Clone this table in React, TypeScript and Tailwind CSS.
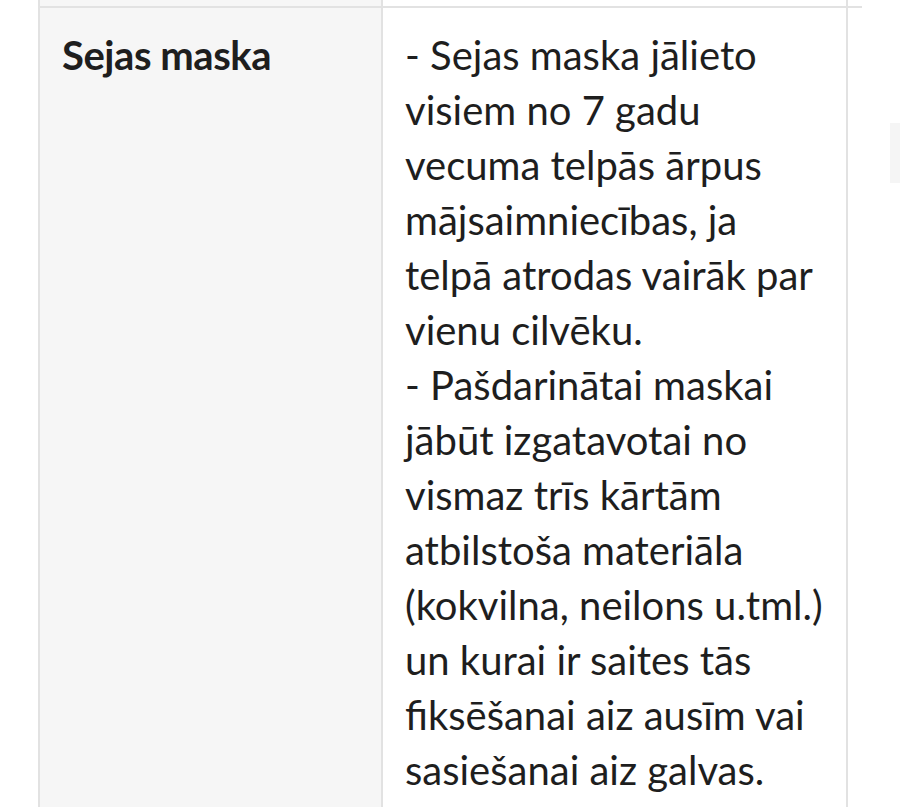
const rule = [
  '- Sejas maska jālieto visiem no 7 gadu vecuma telpās ārpus mājsaimniecības, ja telpā atrodas vairāk par vienu cilvēku.',
  '- Pašdarinātai maskai jābūt izgatavotai no vismaz trīs kārtām atbilstoša materiāla (kokvilna, neilons u.tml.) un kurai ir saites tās fiksēšanai aiz ausīm vai sasiešanai aiz galvas.',
]

export default function App() {
  return (
    <div className="relative w-[900px] h-[807px] overflow-hidden bg-white text-[#1e1e1e] font-['Lato','Liberation_Sans',sans-serif]">
      {/* previous row, mostly scrolled out */}
      <div className="ml-[38px] w-[824px] border-b-2 border-[#e2e2e2] flex">
        <div className="w-[345px] h-[6px] bg-[#f6f6f6] border-x-2 border-[#e2e2e2]" />
        <div className="w-[465px] h-[6px] border-r-2 border-[#e2e2e2]" />
      </div>

      <div className="ml-[38px] flex">
        <div className="w-[345px] shrink-0 bg-[#f6f6f6] border-x-2 border-[#e2e2e2] pl-[22px] pt-[20px]">
          <div className="text-[40px] leading-[55px] font-bold tracking-[-0.45px]">Sejas maska</div>
        </div>
        <div className="w-[465px] shrink-0 border-r-2 border-[#e2e2e2] pl-[22px] pr-[20px] pt-[20px] pb-[20px]">
          {rule.map((t) => (
            <p key={t} className="text-[40px] leading-[55px]">{t}</p>
          ))}
        </div>
      </div>

      {/* edge of the next column */}
      <div className="absolute left-[890px] top-[123px] w-[10px] h-[60px] bg-[#f5f5f5]" />
    </div>
  )
}
